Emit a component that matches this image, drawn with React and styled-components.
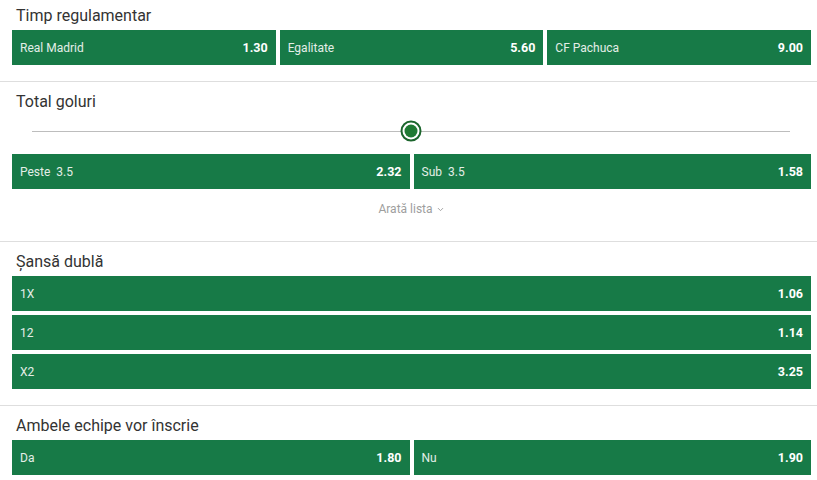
import React from 'react'
import styled, { createGlobalStyle } from 'styled-components'
import { ChevronDown } from 'lucide-react'

const GlobalStyle = createGlobalStyle`
  html, body {
    margin: 0;
    padding: 0;
    background: #fff;
    font-family: Roboto, "Liberation Sans", Arial, sans-serif;
  }
`;

const Page = styled.div`
  width: 817px;
`;

const Section = styled.section`
  padding: ${({ $first }) => ($first ? '4px' : '8px')} 6px 16px 12px;
  border-bottom: 1px solid #dedede;
`;

const Title = styled.h2`
  margin: 0 0 2px 0;
  padding-left: 4px;
  font-size: 16px;
  font-weight: 400;
  line-height: 24px;
  color: #333;
`;

const Row = styled.div`
  display: grid;
  grid-template-columns: repeat(${({ $cols }) => $cols}, 1fr);
  gap: 4px;
`;

const Stack = styled.div`
  display: flex;
  flex-direction: column;
  gap: 4px;
`;

const Odd = styled.div`
  height: 35px;
  display: flex;
  align-items: center;
  justify-content: space-between;
  padding: 0 8px;
  background: #177a47;
  cursor: pointer;
  font-size: 12px;
`;

const Label = styled.span`
  color: #e4eee7;
`;

const Line = styled.span`
  margin-left: 6px;
`;

const Price = styled.span`
  color: #fff;
  font-weight: 700;
  font-size: 12.5px;
`;

const SliderWrap = styled.div`
  height: 38px;
  box-sizing: border-box;
  display: flex;
  align-items: flex-start;
  padding: 15px 21px 0 20px;
`;

const Track = styled.div`
  position: relative;
  flex: 1;
  height: 1px;
  background: #bdbdbd;
`;

const Thumb = styled.div`
  position: absolute;
  left: 50%;
  top: 0;
  width: 21px;
  height: 21px;
  box-sizing: border-box;
  transform: translate(-50%, -50%);
  border-radius: 50%;
  border: 2px solid #1b652c;
  background: #fff;
  display: flex;
  align-items: center;
  justify-content: center;

  &::after {
    content: '';
    width: 13px;
    height: 13px;
    border-radius: 50%;
    background: #1f7a33;
  }
`;

const ShowMore = styled.div`
  margin: 8px 0 4px;
  height: 24px;
  display: flex;
  align-items: center;
  justify-content: center;
  gap: 3px;
  font-size: 12px;
  color: #9e9e9e;
  cursor: pointer;
`;

const OddButton = ({ label, line, price }) => (
  <Odd>
    <Label>
      {label}
      {line && <Line>{line}</Line>}
    </Label>
    <Price>{price}</Price>
  </Odd>
);

export default function App() {
  return (
    <Page>
      <GlobalStyle />
      <Section $first>
        <Title>Timp regulamentar</Title>
        <Row $cols={3}>
          <OddButton label="Real Madrid" price="1.30" />
          <OddButton label="Egalitate" price="5.60" />
          <OddButton label="CF Pachuca" price="9.00" />
        </Row>
      </Section>

      <Section>
        <Title>Total goluri</Title>
        <SliderWrap>
          <Track>
            <Thumb />
          </Track>
        </SliderWrap>
        <Row $cols={2}>
          <OddButton label="Peste" line="3.5" price="2.32" />
          <OddButton label="Sub" line="3.5" price="1.58" />
        </Row>
        <ShowMore>
          Arată lista <ChevronDown size={9} strokeWidth={2.5} />
        </ShowMore>
      </Section>

      <Section>
        <Title>Șansă dublă</Title>
        <Stack>
          <OddButton label="1X" price="1.06" />
          <OddButton label="12" price="1.14" />
          <OddButton label="X2" price="3.25" />
        </Stack>
      </Section>

      <Section>
        <Title>Ambele echipe vor înscrie</Title>
        <Row $cols={2}>
          <OddButton label="Da" price="1.80" />
          <OddButton label="Nu" price="1.90" />
        </Row>
      </Section>
    </Page>
  )
}
